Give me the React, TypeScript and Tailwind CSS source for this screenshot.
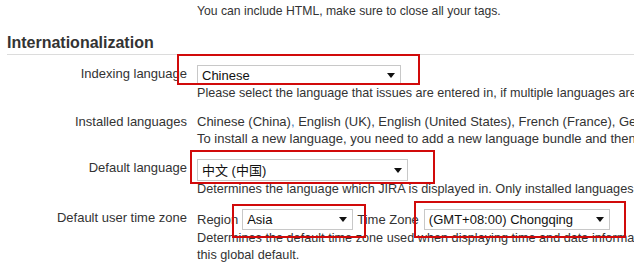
import { ReactNode } from "react";

type SelectProps = {
  value: string;
  width: string;
  height?: string;
  ring?: string;
};

// Caixa de seleção no estilo antigo do JIRA
function FakeSelect({ value, width, height = "h-[21px]", ring }: SelectProps) {
  return (
    <div className={`relative ${width}`}>
      <div className={`flex ${height} items-center justify-between border border-[#c8c8c8] bg-white pl-[4px] pr-[5px] text-[13px] leading-[17px] text-[#111]`}>
        <span className="whitespace-nowrap">{value}</span>
        <span className="h-0 w-0 border-x-[4px] border-t-[5px] border-x-transparent border-t-[#111]" />
      </div>
      {ring && <div className={`pointer-events-none absolute border-2 border-[#d10a0a] ${ring}`} />}
    </div>
  );
}

function Row({ label, children, top }: { label: string; children: ReactNode; top: string }) {
  return (
    <div className={`flex items-start ${top}`}>
      <div className="w-[187px] shrink-0 whitespace-nowrap text-right text-[13px]">{label}</div>
      <div className="ml-[10px] min-w-0 flex-1 whitespace-nowrap text-[12.7px]">{children}</div>
    </div>
  );
}

export default function App() {
  return (
    <div
      className="h-[277px] w-[634px] overflow-hidden bg-white leading-[17px] text-[#333]"
      style={{ fontFamily: '"Liberation Sans", Arial, "Noto Sans CJK SC", sans-serif' }}
    >
      <div className="pl-[197px] pt-[3px] whitespace-nowrap text-[12.2px]">You can include HTML, make sure to close all your tags.</div>

      <h2 className="ml-[7px] mt-[12px] h-[23px] border-b border-[#dcdcdc] text-[16px] font-bold leading-[22px] text-[#333]">
        Internationalization
      </h2>

      <Row label="Indexing language" top="mt-[10px]">
        <FakeSelect value="Chinese" width="w-[204px]" height="h-[20px]" ring="-left-[20px] -top-[11px] -right-[19px] bottom-0" />
        <div className="text-[12.6px]">Please select the language that issues are entered in, if multiple languages are used.</div>
      </Row>

      <Row label="Installed languages" top="mt-[11px]">
        <div className="text-[13px]">
          Chinese (China)<span className="text-[#3b73af]">,</span> English (UK), English (United States), French (France), German (Germany)
        </div>
        <div className="text-[13px]">To install a new language, you need to add a new language bundle and then restart JIRA.</div>
      </Row>

      <Row label="Default language" top="mt-[12px]">
        <FakeSelect value="中文 (中国)" width="w-[211px]" height="h-[22px]" ring="-left-[7px] -top-[9px] -right-[27px] -bottom-[3px]" />
        <div>Determines the language which JIRA is displayed in. Only installed languages are shown.</div>
      </Row>

      <Row label="Default user time zone" top="mt-[11px]">
        <div className="flex items-center">
          <span className="text-[13px]">Region</span>
          <div className="ml-[4px]">
            <FakeSelect value="Asia" width="w-[111px]" ring="-left-[10px] -top-[5px] -right-[13px] -bottom-[8px]" />
          </div>
          <span className="ml-[4px] text-[13px]">Time Zone</span>
          <div className="ml-[5px]">
            <FakeSelect value="(GMT+08:00) Chongqing" width="w-[186px]" ring="-left-[10px] -top-[8px] -right-[16px] -bottom-[8px]" />
          </div>
        </div>
        <div>Determines the default time zone used when displaying time and date information, if users have not set</div>
        <div>this global default.</div>
      </Row>
    </div>
  );
}
